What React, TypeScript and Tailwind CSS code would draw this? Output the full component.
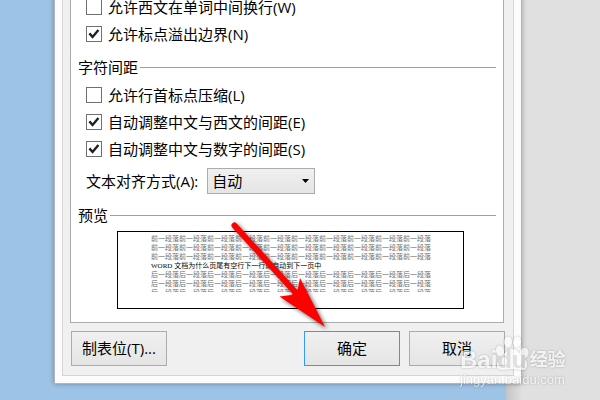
import { useId } from 'react';

const sans = "font-['Open_Sans','Noto_Sans_CJK_SC',sans-serif]";

function CheckRow({ label, checked = false }: { label: string; checked?: boolean }) {
  const id = useId();
  return (
    <div className="flex h-[27px] items-start gap-[6px] pl-[15px] pt-[5px]">
      <span className="relative flex size-4 shrink-0">
        <input
          id={id}
          type="checkbox"
          defaultChecked={checked}
          className="peer size-4 appearance-none border border-[#707070] bg-white"
        />
        <svg
          viewBox="0 0 16 16"
          className="pointer-events-none absolute inset-0 hidden size-4 peer-checked:block"
          fill="none"
          stroke="#1f1f1f"
          strokeWidth="2.4"
        >
          <path d="M3.4 7.4 6.6 11 12.4 4" />
        </svg>
      </span>
      <label htmlFor={id} className="-mt-[2px] whitespace-nowrap">
        {label}
      </label>
    </div>
  );
}

function GroupHeading({ title }: { title: string }) {
  return (
    <div className="flex h-[29px] items-center gap-[2px] px-[7px]">
      <h2 className="whitespace-nowrap pb-[2px]">{title}</h2>
      <div className="h-px flex-1 bg-[#a0a0a0]" />
    </div>
  );
}

function DialogButton({ label, primary = false }: { label: string; primary?: boolean }) {
  return (
    <button
      type="button"
      className={`h-[35px] w-24 border bg-linear-to-b from-[#f0f0f0] to-[#e5e5e5] pb-px ${
        primary ? 'border-[#3399ff]' : 'border-[#acacac]'
      }`}
    >
      {label}
    </button>
  );
}

function Preview() {
  const before = '前一段落'.repeat(10);
  const after = '后一段落'.repeat(10);
  return (
    <div className="ml-auto mr-[39px] mt-px h-[78px] w-[347px] border border-black bg-white pl-[33px] pt-[3px]">
      <div className="h-[57px] overflow-hidden whitespace-nowrap font-['Liberation_Serif','Noto_Sans_CJK_SC',serif] text-[7px] leading-[9px] text-[#707070]">
        <p>{before}</p>
        <p>{before}</p>
        <p>{before}</p>
        <p className="text-black">WORD 文档为什么页尾有空行下一行却自动到下一页中</p>
        <p>{after}</p>
        <p>{after}</p>
        <p>{after}</p>
      </div>
    </div>
  );
}

function Arrow() {
  return (
    <svg
      viewBox="0 0 120 130"
      className="pointer-events-none absolute left-[220px] top-[210px] h-[130px] w-[120px] drop-shadow-[2px_2px_2px_rgba(0,0,0,0.6)]"
      fill="#ff0000"
    >
      <path d="M14.5 15.5 75 82" stroke="#ff0000" strokeWidth="6" strokeLinecap="round" />
      <path d="M105 117 59.5 86.5 71.5 85 77.5 80 80 68Z" />
    </svg>
  );
}

function Watermark() {
  return (
    <div className="pointer-events-none absolute left-[460px] top-[334px] w-[108px] font-['Liberation_Sans','Noto_Sans_CJK_SC',sans-serif] text-white opacity-60 drop-shadow-[0_0_1px_rgba(0,0,0,0.4)]">
      <svg viewBox="0 0 108 54" className="absolute left-0 top-0 h-[54px] w-[108px]" fill="currentColor">
        <ellipse cx="40" cy="17" rx="4" ry="5.5" transform="rotate(-14 40 17)" />
        <ellipse cx="48" cy="8" rx="4" ry="5.5" />
        <ellipse cx="57" cy="8" rx="4" ry="5.5" transform="rotate(10 57 8)" />
        <ellipse cx="64" cy="19" rx="4.5" ry="5.5" transform="rotate(18 64 19)" />
        <path d="M52 15c-6 0-8 6-12 10-5 5-4 11 3 11 4 0 6-1 9-1s6 1 10 1c6 0 7-7 2-12-5-4-6-9-12-9Z" />
      </svg>
      <div className="relative flex items-end pt-[15px] leading-[22px]">
        <span className="text-[24px] font-bold">
          Bai<span className="text-[#d0d0d0]">du</span>
        </span>
        <span className="ml-[3px] text-[18px] font-bold">经验</span>
      </div>
      <p className="relative whitespace-nowrap text-[13px] leading-[18px]">jingyan.baidu.com</p>
    </div>
  );
}

export default function App() {
  return (
    <div className={`relative h-screen overflow-hidden bg-[#9dc3e6] text-[15px] leading-5 text-black ${sans}`}>
      <div className="absolute inset-y-0 right-0 w-[94px] bg-linear-to-r from-[#c4c4c4] to-[#e0e0e0] to-[16px]" />
      <main className="relative ml-[54px] mr-[78px] border border-t-0 border-[#b4b4b4] bg-[#fcfcfc] px-[7px] pb-[7px] shadow-[0_0_5px_rgba(0,0,0,0.3)]">
        <div className="border border-t-0 border-[#d5d5d5] bg-[#f0f0f0] pb-[9px] pl-[7px] pr-[8px]">
          <form>
            <section className="mr-px border border-t-0 border-[#acacac] bg-white pb-[13px]">
              <div className="-mt-[6px]">
                <CheckRow label="允许西文在单词中间换行(W)" />
                <CheckRow label="允许标点溢出边界(N)" checked />
              </div>
              <div className="mt-[5px]">
                <GroupHeading title="字符间距" />
                <CheckRow label="允许行首标点压缩(L)" />
                <CheckRow label="自动调整中文与西文的间距(E)" checked />
                <CheckRow label="自动调整中文与数字的间距(S)" checked />
              </div>
              <div className="mt-[5px] flex items-center gap-[9px] pl-[15px]">
                <label htmlFor="align" className="whitespace-nowrap">
                  文本对齐方式(A):
                </label>
                <span className="relative flex">
                  <select
                    id="align"
                    className="h-[26px] w-[108px] appearance-none border border-[#acacac] bg-linear-to-b from-[#f0f0f0] to-[#e5e5e5] pl-1"
                  >
                    <option>自动</option>
                  </select>
                  <svg viewBox="0 0 7 4" className="pointer-events-none absolute right-[6px] top-[11px] h-1 w-[7px]">
                    <path d="M0 0h7L3.5 4Z" />
                  </svg>
                </span>
              </div>
              <div className="mt-[7px]">
                <GroupHeading title="预览" />
                <Preview />
              </div>
            </section>
            <div className="ml-px mt-2 flex gap-[9px]">
              <DialogButton label="制表位(T)..." />
              <div className="flex-1" />
              <DialogButton label="确定" primary />
              <DialogButton label="取消" />
            </div>
          </form>
        </div>
      </main>
      <Arrow />
      <Watermark />
    </div>
  );
}
